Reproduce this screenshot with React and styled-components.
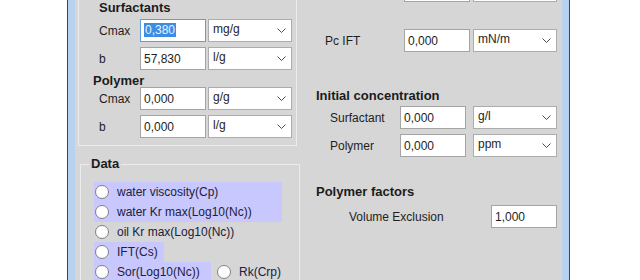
import React from 'react';
import styled, { createGlobalStyle } from 'styled-components';

const Global = createGlobalStyle`
  html, body { margin: 0; padding: 0; background: #ffffff; overflow: hidden; }
  body { font-family: "Liberation Sans", Arial, sans-serif; }
  #root { height: 280px; }
`;

const Page = styled.div`
  height: 280px;
  display: flex;
  padding-left: 67px;
  overflow: hidden;
`;

const Window = styled.div`
  width: 503px;
  height: 100%;
  box-sizing: border-box;
  border-left: 1px solid #2e4a5e;
  border-right: 1px solid #2e4a5e;
  padding: 0 7px;
  background: #b6d2ee;
  display: flex;
`;

const Content = styled.div`
  flex: 1;
  background: #d6d6d6;
  display: flex;
  align-items: flex-start;
  overflow: hidden;
`;

const LeftCol = styled.div`
  margin-left: 3px;
  width: 222px;
  display: flex;
  flex-direction: column;
  flex: none;
`;

const RightCol = styled.div`
  margin-left: 16px;
  display: flex;
  flex-direction: column;
  flex: none;
`;

const Group = styled.div`
  width: 219px;
  box-sizing: border-box;
  margin-top: -12px;
  border: 1px solid #ececec;
  padding: 11px 0 7px 20px;
  display: flex;
  flex-direction: column;
`;

const DataSet = styled.fieldset`
  margin: 11px 0 0 2px;
  width: 220px;
  height: 140px;
  box-sizing: border-box;
  border: 1px solid #ececec;
  padding: 11px 0 0 13px;
  display: flex;
  flex-direction: column;
`;

const Legend = styled.legend`
  font-size: 13px;
  font-weight: bold;
  line-height: 14px;
  color: #1b1b1b;
  margin-left: -5px;
  padding: 0 2px;
`;

const SectionTitle = styled.div`
  font-size: 13px;
  font-weight: bold;
  line-height: 14px;
  height: 14px;
  color: #1b1b1b;
  white-space: nowrap;
  margin-top: ${p => p.$mt || 0}px;
  margin-bottom: ${p => p.$mb || 0}px;
  margin-left: ${p => p.$ml || 0}px;
`;

const FieldRow = styled.div`
  display: flex;
  align-items: center;
  height: 23px;
  flex: none;
  padding-left: ${p => p.$indent || 0}px;
  margin-top: ${p => p.$mt || 0}px;
`;

const FieldLabel = styled.span`
  width: ${p => p.$w}px;
  flex: none;
  font-size: 12px;
  color: #1e1e1e;
  white-space: nowrap;
`;

const TextBox = styled.div`
  width: 66px;
  height: 23px;
  box-sizing: border-box;
  flex: none;
  background: #ffffff;
  border: 1px solid ${p => (p.$focus ? '#5b9ee2' : '#a4a4a4')};
  padding-left: 3px;
  display: flex;
  align-items: center;
  font-size: 12px;
  color: #1e1e1e;
`;

const Selected = styled.span`
  background: #3d8ee2;
  color: #e9f2ff;
  line-height: 14px;
  padding: 0 1px;
  margin-top: -2px;
`;

const Combo = styled.div`
  width: 84px;
  height: 23px;
  box-sizing: border-box;
  flex: none;
  margin-left: ${p => p.$gap}px;
  background: #ffffff;
  border: 1px solid #acacac;
  padding: 0 5px 0 4px;
  display: flex;
  align-items: center;
  justify-content: space-between;
  font-size: 12px;
  color: #1e1e1e;
`;

const ComboText = styled.span`
  margin-top: -3px;
`;

const Chevron = () => (
  <svg width="9" height="5" viewBox="0 0 9 5" fill="none">
    <polyline points="0.5,0.5 4.5,4.5 8.5,0.5" stroke="#4a4a4a" strokeWidth="1" />
  </svg>
);

const OptionList = styled.div`
  display: flex;
  flex-direction: column;
`;

const OptionLine = styled.div`
  display: flex;
  gap: 5px;
`;

const Option = styled.label`
  display: flex;
  align-items: center;
  height: 20px;
  box-sizing: border-box;
  width: ${p => (p.$w ? `${p.$w}px` : 'auto')};
  background: ${p => (p.$hl ? '#c8c8ff' : 'transparent')};
  font-size: 12px;
  color: #20203a;
  white-space: nowrap;
  flex: none;
`;

const Circle = styled.span`
  width: 14px;
  height: 14px;
  box-sizing: border-box;
  border-radius: 50%;
  border: 1px solid #838383;
  background: radial-gradient(circle at 50% 40%, #ffffff 55%, #ececec 100%);
  margin-left: 1px;
  margin-right: 8px;
  flex: none;
`;

const Field = ({ label, value, unit, focus, indent, labelW, gap, mt }) => (
  <FieldRow $indent={indent} $mt={mt}>
    <FieldLabel $w={labelW}>{label}</FieldLabel>
    <TextBox $focus={focus}>{focus ? <Selected>{value}</Selected> : value}</TextBox>
    {unit !== undefined && (
      <Combo $gap={gap}>
        <ComboText>{unit}</ComboText>
        <Chevron />
      </Combo>
    )}
  </FieldRow>
);

const Radio = ({ w, hl, children }) => (
  <Option $w={w} $hl={hl}>
    <Circle />
    {children}
  </Option>
);

export default function App() {
  return (
    <>
      <Global />
      <Page>
        <Window>
          <Content>
            <LeftCol>
              <Group>
                <SectionTitle $mt={1} $mb={4}>Surfactants</SectionTitle>
                <Field label="Cmax" value="0,380" unit="mg/g" focus labelW={41} gap={2} />
                <Field label="b" value="57,830" unit="l/g" labelW={41} gap={2} mt={5} />
                <SectionTitle $mt={4} $mb={-1} $ml={-6}>Polymer</SectionTitle>
                <Field label="Cmax" value="0,000" unit="g/g" labelW={41} gap={2} />
                <Field label="b" value="0,000" unit="l/g" labelW={41} gap={2} mt={5} />
              </Group>
              <DataSet>
                <Legend>Data</Legend>
                <OptionList>
                  <Radio w={188} hl>water viscosity(Cp)</Radio>
                  <Radio w={188} hl>water Kr max(Log10(Nc))</Radio>
                  <Radio>oil Kr max(Log10(Nc))</Radio>
                  <Radio w={70} hl>IFT(Cs)</Radio>
                  <OptionLine>
                    <Radio w={117} hl>Sor(Log10(Nc))</Radio>
                    <Radio>Rk(Crp)</Radio>
                  </OptionLine>
                </OptionList>
              </DataSet>
            </LeftCol>
            <RightCol>
              <Field label="" value="" unit="" indent={9} labelW={79} gap={3} mt={-21} />
              <Field label="Pc IFT" value="0,000" unit="mN/m" indent={9} labelW={79} gap={3} mt={27} />
              <SectionTitle $mt={37}>Initial concentration</SectionTitle>
              <Field label="Surfactant" value="0,000" unit="g/l" indent={14} labelW={70} gap={7} mt={3} />
              <Field label="Polymer" value="0,000" unit="ppm" indent={14} labelW={70} gap={7} mt={5} />
              <SectionTitle $mt={28}>Polymer factors</SectionTitle>
              <Field label="Volume Exclusion" value="1,000" indent={33} labelW={142} mt={6} />
            </RightCol>
          </Content>
        </Window>
      </Page>
    </>
  );
}
